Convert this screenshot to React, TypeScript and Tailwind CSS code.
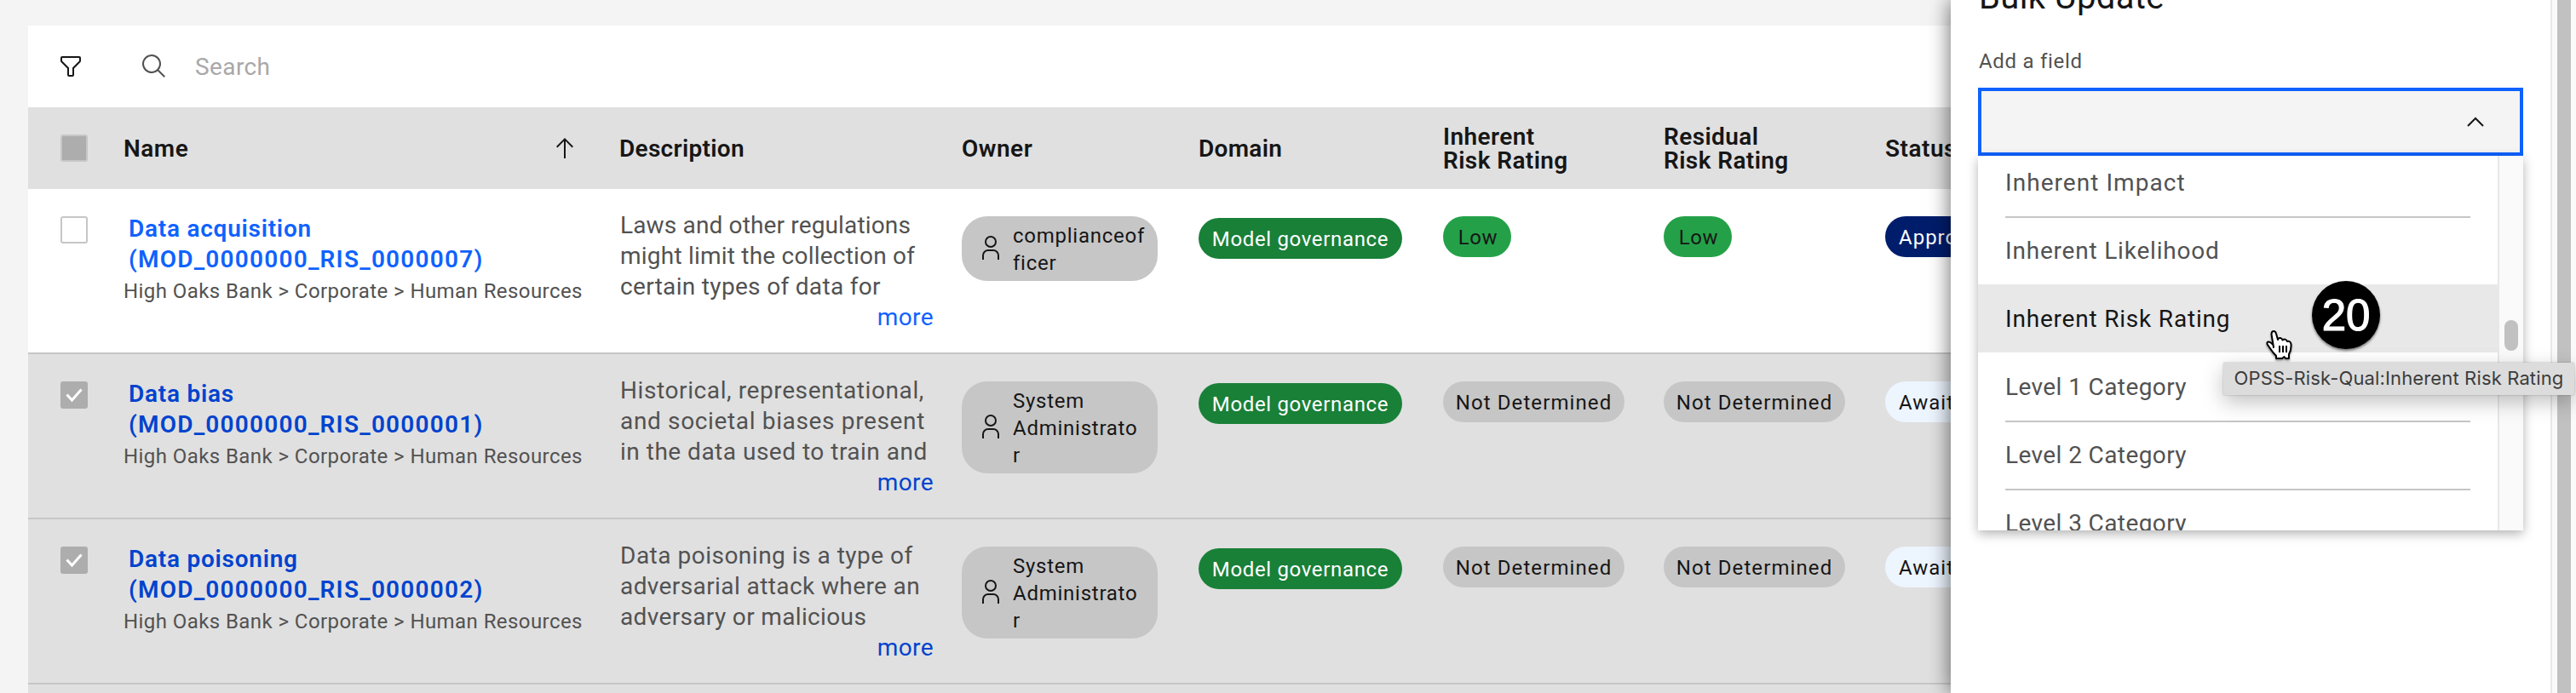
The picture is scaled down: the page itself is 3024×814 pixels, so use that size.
const S = "inline-block whitespace-nowrap";
const ROB = "font-['Roboto',sans-serif]";

const columns =
  "grid grid-cols-[113px_582px_401px_278px_287px_259px_260px_1fr]";

function Filter() {
  return (
    <svg className="h-8 w-8" viewBox="0 0 32 32" fill="#161616">
      <path d="M18 28h-4a2 2 0 0 1-2-2v-7.59L4.59 11A2 2 0 0 1 4 9.59V6a2 2 0 0 1 2-2h20a2 2 0 0 1 2 2v3.59a2 2 0 0 1-.59 1.41L20 18.41V26a2 2 0 0 1-2 2ZM6 6v3.59l8 8V26h4v-8.41l8-8V6Z" />
    </svg>
  );
}

function SearchIcon() {
  return (
    <svg className="h-8 w-8" viewBox="0 0 32 32" fill="#525252">
      <path d="m29 27.586-7.552-7.552a11.018 11.018 0 1 0-1.414 1.414L27.586 29ZM4 13a9 9 0 1 1 9 9 9.01 9.01 0 0 1-9-9Z" />
    </svg>
  );
}

function Arrow() {
  return (
    <svg className="h-8 w-8" viewBox="0 0 32 32" fill="#161616">
      <path d="M16 4 6 14l1.41 1.41L15 7.83V28h2V7.83l7.59 7.58L26 14 16 4z" />
    </svg>
  );
}

function Person() {
  return (
    <svg className="mb-1 h-8 w-8 shrink-0" viewBox="0 0 32 32" fill="#161616">
      <path d="M16 4a5 5 0 1 1-5 5 5 5 0 0 1 5-5m0-2a7 7 0 1 0 7 7 7 7 0 0 0-7-7zM26 30h-2v-5a5 5 0 0 0-5-5h-6a5 5 0 0 0-5 5v5H6v-5a7 7 0 0 1 7-7h6a7 7 0 0 1 7 7z" />
    </svg>
  );
}

function CheckBox({ on }: { on: boolean }) {
  return on ? (
    <div className="flex h-8 w-8 items-center justify-center rounded-[3px] bg-[#adadad]">
      <svg className="h-5 w-5" viewBox="0 0 20 20" fill="none" stroke="#fff" strokeWidth="3">
        <path d="M1.5 9.5 7.5 16 18.5 3.5" />
      </svg>
    </div>
  ) : (
    <div className="h-8 w-8 rounded-[3px] border-2 border-[#c6c6c6] bg-white" />
  );
}

const rows = [
  {
    on: false,
    title: "Data acquisition",
    code: "(MOD_0000000_RIS_0000007)",
    lines: [
      { text: "Laws and other regulations", tracking: "tracking-[0.15px]" },
      { text: "might limit the collection of", tracking: "tracking-[0.22px]" },
      { text: "certain types of data for", tracking: "tracking-[0.32px]" },
    ],
    owner: ["complianceof", "ficer"],
    rating: "Low",
    status: "Approved",
  },
  {
    on: true,
    title: "Data bias",
    code: "(MOD_0000000_RIS_0000001)",
    lines: [
      { text: "Historical, representational,", tracking: "tracking-[0.6px]" },
      { text: "and societal biases present", tracking: "tracking-[0.65px]" },
      { text: "in the data used to train and", tracking: "tracking-[0.5px]" },
    ],
    owner: ["System", "Administrato", "r"],
    rating: "Not Determined",
    status: "Awaiting",
  },
  {
    on: true,
    title: "Data poisoning",
    code: "(MOD_0000000_RIS_0000002)",
    lines: [
      { text: "Data poisoning is a type of", tracking: "tracking-[0.5px]" },
      { text: "adversarial attack where an", tracking: "tracking-[0.4px]" },
      { text: "adversary or malicious", tracking: "tracking-[0.35px]" },
    ],
    owner: ["System", "Administrato", "r"],
    rating: "Not Determined",
    status: "Awaiting",
  },
];

function Rating({ value }: { value: string }) {
  return value === "Low" ? (
    <div className="mt-8 flex h-12 w-20 items-center justify-center rounded-3xl bg-[#24a148] pt-0.5 pl-0.5 text-[24px] tracking-[0.6px] text-[#161616]">
      <span className={S}>Low</span>
    </div>
  ) : (
    <div className="mt-8 flex h-12 w-[213px] items-center justify-center rounded-3xl bg-[#c6c6c6] pt-0.5 text-[24px] tracking-[1.1px] text-[#161616]">
      <span className={S}>{value}</span>
    </div>
  );
}

function Row({ row }: { row: (typeof rows)[number] }) {
  return (
    <div className={`${columns} h-[194px] border-b-2 border-[#c6c6c6] ${row.on ? "bg-[#e0e0e0]" : "bg-white"}`}>
      <div className="pt-8 pl-[38px]">
        <CheckBox on={row.on} />
      </div>
      <div className="pt-[29px]">
        <div className={`pl-[5px] text-[28px] leading-9 font-semibold ${row.on ? "text-[#0043ce]" : "text-[#0f62fe]"}`}>
          <div><span className={`${S} tracking-[0.75px]`}>{row.title}</span></div>
          <div><span className={`${S} tracking-[1.22px]`}>{row.code}</span></div>
        </div>
        <div className="-ml-px pt-px text-[24px] leading-9 text-[#525252]">
          <span className={`${S} tracking-[0.43px]`}>High Oaks Bank &gt; Corporate &gt; Human Resources</span>
        </div>
      </div>
      <div className="w-[368px] pt-[25px] text-[28px] leading-9 text-[#525252]">
        {row.lines.map((l) => (
          <div key={l.text}><span className={`${S} ${l.tracking}`}>{l.text}</span></div>
        ))}
        <div className={`text-right ${row.on ? "text-[#0043ce]" : "text-[#0f62fe]"}`}>
          <span className={`${S} tracking-[0.4px]`}>more</span>
        </div>
      </div>
      <div className="pt-8">
        <div className="flex w-[230px] items-center gap-[10px] rounded-[30px] bg-[#c6c6c6] pt-[7px] pb-[5px] pl-[18px] text-[24px] leading-8 tracking-[0.75px] text-[#161616]">
          <Person />
          <div>
            {row.owner.map((l) => (
              <div key={l}><span className={S}>{l}</span></div>
            ))}
          </div>
        </div>
      </div>
      <div className="pt-[34px]">
        <div className="flex h-12 w-[239px] items-center justify-center rounded-3xl bg-[#198038] pt-0.5 text-[24px] tracking-[0.65px] text-white">
          <span className={S}>Model governance</span>
        </div>
      </div>
      <Rating value={row.rating} />
      <Rating value={row.rating} />
      <div className="pt-8">
        <div className={`flex h-12 w-[220px] items-center rounded-3xl pt-0.5 pl-4 text-[24px] tracking-[1px] ${row.on ? "bg-[#edf5ff] text-[#161616]" : "bg-[#001d6c] text-white"}`}>
          <span className={S}>{row.status}</span>
        </div>
      </div>
    </div>
  );
}

const options = [
  { label: "Inherent Impact", line: false, tracking: "tracking-[1.05px]" },
  { label: "Inherent Likelihood", line: true, tracking: "tracking-[0.8px]" },
  { label: "Inherent Risk Rating", line: false, tracking: "tracking-[0.8px]" },
  { label: "Level 1 Category", line: false, tracking: "tracking-[0.4px]" },
  { label: "Level 2 Category", line: true, tracking: "tracking-[0.4px]" },
  { label: "Level 3 Category", line: true, tracking: "tracking-[0.4px]" },
];

function Drawer() {
  return (
    <div className="absolute top-0 right-0 flex h-[814px] w-[734px] bg-white shadow-[0_0_24px_rgba(0,0,0,0.6)]">
      <div className="w-[704px] pl-8">
        <div className="-mt-[27px] h-12 pl-px text-[40px] leading-[48px] tracking-[0.35px] text-[#161616]">
          <span className={S}>Bulk Update</span>
        </div>
        <div className="mt-[35px] h-[47px] pl-px text-[24px] leading-8 tracking-[0.7px] text-[#525252]">
          <span className={S}>Add a field</span>
        </div>
        <div className="flex h-20 w-[640px] items-center justify-end border-4 border-[#0f62fe] bg-[#f4f4f4] pr-[42px]">
          <svg className="h-3 w-5" viewBox="0 0 20 12" fill="none" stroke="#161616" strokeWidth="2">
            <path d="M1 11 10 2 19 11" />
          </svg>
        </div>
        <div className="flex h-[440px] w-[640px] overflow-hidden bg-white shadow-[0_4px_12px_rgba(0,0,0,0.3)]">
          <div className="-mt-[9px] w-[610px]">
            {options.map((o) => (
              <div key={o.label} className={`h-20 px-8 ${o.label === "Inherent Risk Rating" ? "bg-[#e8e8e8] text-[#161616]" : "text-[#525252]"}`}>
                <div className={`h-20 border-t-2 pt-[21px] text-[28px] leading-9 ${o.tracking} ${o.line ? "border-[#c6c6c6]" : "border-transparent"}`}>
                  <span className={S}>{o.label}</span>
                </div>
              </div>
            ))}
          </div>
          <div className="flex w-[30px] justify-center border-l-2 border-[#e8e8e8] bg-[#fafafa] pt-[193px]">
            <div className="h-9 w-4 rounded-full bg-[#c1c1c1]" />
          </div>
        </div>
      </div>
      <div className="flex w-[30px] justify-center border-l-2 border-[#e8e8e8] bg-[#fafafa]">
        <div className="h-full w-4 bg-[#c1c1c1]" />
      </div>
    </div>
  );
}

export default function App() {
  return (
    <div className={`relative h-[814px] w-[3024px] overflow-hidden bg-[#f4f4f4] pt-[30px] pl-[33px] ${ROB}`}>
      <div className="h-[784px] overflow-hidden bg-white">
        <div className="flex h-24 items-center pl-[34px]">
          <Filter />
          <div className="ml-[66px]"><SearchIcon /></div>
          <span className={`${S} ml-8 pt-0.5 text-[28px] tracking-[0.4px] text-[#a8a8a8]`}>Search</span>
        </div>
        <div className={`${columns} h-24 items-center bg-[#e0e0e0] text-[28px] leading-7 font-semibold tracking-[0.5px] text-[#161616]`}>
          <div className="pl-[38px]">
            <div className="h-8 w-8 rounded-[3px] border-2 border-[#c6c6c6] bg-[#adadad]" />
          </div>
          <div className="flex items-center justify-between pr-[49px]">
            <span className="-ml-px pt-0.5">Name</span>
            <Arrow />
          </div>
          <span className="-ml-px pt-0.5 tracking-[0.3px]">Description</span>
          <span className="pt-0.5">Owner</span>
          <span className="pt-0.5 tracking-[0.3px]">Domain</span>
          <span className="pt-0.5 tracking-[0.4px]">Inherent<br />Risk Rating</span>
          <span className="pt-0.5 tracking-[0.4px]">Residual<br />Risk Rating</span>
          <span className="pt-0.5">Status</span>
        </div>
        {rows.map((r) => <Row key={r.code} row={r} />)}
        <div className="h-4 bg-[#e0e0e0]" />
      </div>
      <Drawer />
      <div className="absolute top-[426px] left-[2610px] flex h-[38px] w-[412px] items-center justify-center rounded-[2px] bg-[#dcdcdc] pb-0.5 font-['Inter',sans-serif] text-[22px] tracking-[0.14px] text-[#3c3c3c] shadow-[0_8px_24px_rgba(0,0,0,0.25),0_0_2px_rgba(0,0,0,0.3)]">
        <span className={S}>OPSS-Risk-Qual:Inherent Risk Rating</span>
      </div>
      <div className="absolute top-[330px] left-[2714px] flex h-20 w-20 items-center justify-center rounded-full bg-black font-['Liberation_Sans',sans-serif] text-[51px] leading-none text-white shadow-[0_2px_3px_rgba(0,0,0,0.5)] [-webkit-text-stroke:1.2px_white]">
        20
      </div>
      <svg className="absolute top-[386px] left-[2658px] h-[38px] w-9 drop-shadow-[0_2px_1px_rgba(0,0,0,0.4)]" viewBox="0 0 36 38" fill="#fff" stroke="#000" strokeWidth="2">
        <path strokeLinejoin="round" d="M11 22 8.500 6.500Q8.500 3 11 3Q13.500 3 14 6L16 13Q16.500 10.500 19 11Q21 11.500 21.500 13.500Q25 11 27 15Q30.500 14 31.500 18Q32 25 29 30V35H25L23.500 33L21 35H14V32Q10 28 7.500 24L4 19Q2.500 16 4.500 15.500Q7 15 10.500 19Z" />
        <path d="M18 20V28M22 20V28M26 20V28" />
      </svg>
    </div>
  );
}
